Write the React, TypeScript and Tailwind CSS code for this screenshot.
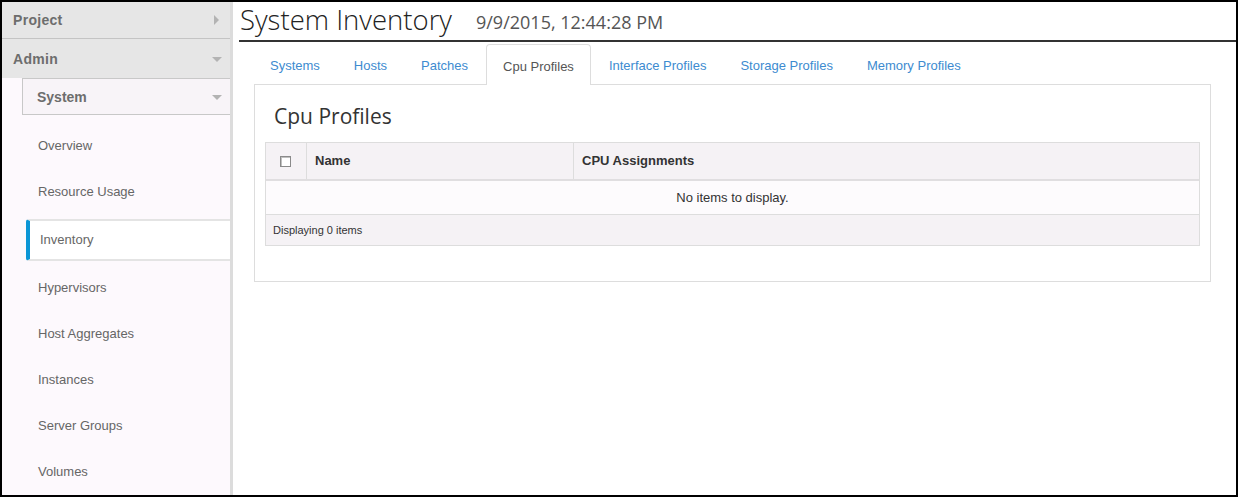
const navItems = [
  "Overview",
  "Resource Usage",
  "Inventory",
  "Hypervisors",
  "Host Aggregates",
  "Instances",
  "Server Groups",
  "Volumes",
];

const tabs = [
  "Systems",
  "Hosts",
  "Patches",
  "Cpu Profiles",
  "Interface Profiles",
  "Storage Profiles",
  "Memory Profiles",
];

const sans = "font-['Liberation_Sans',Arial,sans-serif]";
const display = "font-['Open_Sans','DejaVu_Sans',sans-serif]";

function CaretDown() {
  return (
    <span className="h-0 w-0 border-x-[5px] border-t-[5px] border-x-transparent border-t-[#b3b3b3]" />
  );
}

function Sidebar() {
  return (
    <aside
      className={`flex w-[231px] shrink-0 flex-col border-r-[3px] border-[#dcdcdc] bg-[#fdf9fd] ${sans}`}
    >
      <div className="flex h-[37px] items-center justify-between border-b border-[#c4c4c4] bg-[#e6e6e6] pl-[11px] pr-[11px]">
        <span className="text-[14px] font-bold tracking-[0.3px] text-[#6d6d6d]">
          Project
        </span>
        <span className="h-0 w-0 border-y-[5px] border-l-[5px] border-y-transparent border-l-[#b3b3b3]" />
      </div>
      <div className="flex h-[39px] items-center justify-between bg-[#e6e6e6] pt-[2px] pl-[11px] pr-[8px]">
        <span className="text-[14px] font-bold tracking-[0.3px] text-[#6d6d6d]">
          Admin
        </span>
        <CaretDown />
      </div>
      <div className="ml-[20px] flex h-[37px] items-center justify-between border border-r-0 border-[#c8c8c8] bg-[#f8f4f8] pt-[1px] pl-[14px] pr-[8px]">
        <span className="text-[14px] font-bold text-[#6d6d6d]">System</span>
        <CaretDown />
      </div>
      <nav className="mt-[12px] flex flex-col gap-[8px]">
        {navItems.map((item) =>
          item === "Inventory" ? (
            <div
              key={item}
              className="ml-[24px] flex h-[42px] items-center rounded-l-[3px] border-y-2 border-l-4 border-y-[#e4e4e4] border-l-[#0b96d6] bg-white pl-[10px] text-[13px] text-[#666]"
            >
              {item}
            </div>
          ) : (
            <div
              key={item}
              className="flex h-[38px] items-center pl-[36px] text-[13px] text-[#666]"
            >
              {item}
            </div>
          )
        )}
      </nav>
    </aside>
  );
}

function ProfilesTable() {
  return (
    <div className={`border border-[#dddddd] ${sans}`}>
      <div className="flex h-[38px] border-b-2 border-[#e0dee0] bg-[#f5f2f5] text-[13px] font-bold text-[#333]">
        <div className="flex w-[41px] items-center justify-center border-r border-[#dddddd]">
          <span className="mr-[1px] h-[11px] w-[11px] border border-[#8a8a8a] bg-white shadow-[inset_1px_1px_0_#c0c0c0]" />
        </div>
        <div className="flex w-[267px] items-center border-r border-[#dddddd] pl-[8px]">
          Name
        </div>
        <div className="flex flex-1 items-center pl-[8px]">CPU Assignments</div>
      </div>
      <div className="flex h-[34px] items-center justify-center border-b border-[#dddddd] bg-[#fdfbfd] text-[13px] text-[#333]">
        No items to display.
      </div>
      <div className="flex h-[30px] items-center bg-[#f5f2f5] pl-[7px] text-[11px] text-[#333]">
        Displaying 0 items
      </div>
    </div>
  );
}

export default function App() {
  return (
    <div className="flex h-[497px] w-[1238px] border-2 border-black bg-white">
      <Sidebar />
      <main className="flex min-w-0 flex-1 flex-col">
        <header className="ml-[6px] flex h-[40px] items-center border-b-2 border-[#333] pl-[1px]">
          <h1
            className={`${display} pb-[2px] text-[27.5px] leading-none font-light text-[#222]`}
          >
            System Inventory
          </h1>
          <span className={`${display} ml-[24px] pt-[3px] text-[18px] text-[#555]`}>
            9/9/2015, 12:44:28 PM
          </span>
        </header>
        <div className={`mt-[2px] ml-[21px] flex items-end ${sans}`}>
          {tabs.map((tab) =>
            tab === "Cpu Profiles" ? (
              <div
                key={tab}
                className="relative z-10 -mb-px mr-[2px] flex h-[41px] items-center rounded-t-[4px] border border-b-0 border-[#dddddd] bg-white px-[16px] pt-[3px] text-[13px] text-[#555]"
              >
                {tab}
              </div>
            ) : (
              <div
                key={tab}
                className="mr-[2px] flex h-[40px] items-center px-[16px] pt-[3px] text-[13px] text-[#3d8bd0]"
              >
                {tab}
              </div>
            )
          )}
        </div>
        <section className="mr-[25px] ml-[21px] border border-[#dddddd] px-[10px] pt-[15px] pb-[35px]">
          <h2
            className={`${display} mb-[10px] pl-[9px] text-[21px] leading-[32px] font-normal text-[#333]`}
          >
            Cpu Profiles
          </h2>
          <ProfilesTable />
        </section>
      </main>
    </div>
  );
}
